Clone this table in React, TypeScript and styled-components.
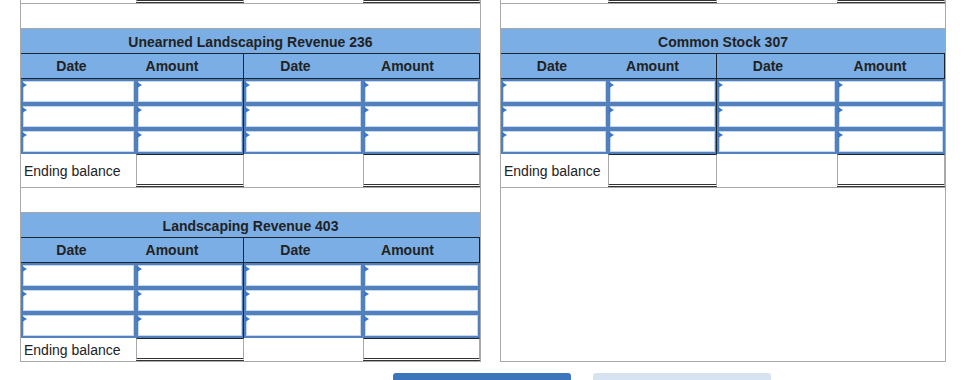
import React from 'react';
import styled, { createGlobalStyle } from 'styled-components';

const GRAY = '#a9a9a9';
const DARK = '#1b2530';
const HEAD_BG = '#7aaee4';
const INPUT_BORDER = '#5280bd';
const INPUT_INNER = '#c3d7f1';

const GlobalStyle = createGlobalStyle`
  html, body { margin: 0; padding: 0; background: #fff; }
  body {
    font-family: "Liberation Sans", Arial, sans-serif;
    color: #222;
    overflow: hidden;
  }
  * { box-sizing: border-box; }
`;

const Page = styled.div`
  display: flex;
  flex-direction: column;
`;

const Panels = styled.div`
  display: flex;
  align-items: flex-start;
  gap: 19px;
  padding-left: 20px;
`;

const Panel = styled.div<{ $cols: string }>`
  --cols: ${(p) => p.$cols};
  display: flex;
  flex-direction: column;
  height: 362px;
  border: 1px solid ${GRAY};
  border-top: none;
`;

const Row = styled.div`
  display: grid;
  grid-template-columns: var(--cols);
`;

const TailRow = styled(Row)`
  height: 4px;
  border-bottom: 1px solid ${GRAY};
`;

const Spacer = styled.div`
  height: 24px;
`;

const Section = styled.div`
  display: flex;
  flex-direction: column;
  border-top: 1px solid ${GRAY};
`;

const Title = styled.div`
  height: 25px;
  padding-top: 1px;
  background: ${HEAD_BG};
  border-bottom: 1px solid ${DARK};
  display: flex;
  align-items: center;
  justify-content: center;
  font-weight: bold;
  font-size: 14px;
  color: #222;
`;

const HeaderRow = styled(Row)`
  height: 25px;
  background: ${HEAD_BG};
  border-bottom: 1px solid ${DARK};
  box-shadow: inset -1px 0 0 ${DARK};
`;

const HeaderCell = styled.div<{ $shift: number; $divider?: boolean }>`
  display: flex;
  align-items: center;
  justify-content: center;
  padding-right: ${(p) => p.$shift}px;
  font-weight: bold;
  font-size: 14px;
  color: #222;
  ${(p) => (p.$divider ? `border-left: 1px solid ${DARK}; margin-left: -1px;` : '')}
`;

const InputRow = styled(Row)`
  height: 25px;
`;

const InputCell = styled.div<{ $divider?: boolean }>`
  height: 25px;
  background: #fff;
  border: 2px solid ${INPUT_BORDER};
  box-shadow: inset 0 0 0 1px ${INPUT_INNER}
    ${(p) => (p.$divider ? `, -1px 0 0 0 ${DARK}` : '')};
  padding-top: 1px;
`;

const Marker = styled.span`
  display: block;
  width: 0;
  height: 0;
  margin-left: -1px;
  border-top: 3.5px solid transparent;
  border-bottom: 3.5px solid transparent;
  border-left: 5px solid #3a77c8;
`;

const EndingRow = styled(Row)<{ $h: number; $last?: boolean }>`
  height: ${(p) => p.$h + (p.$last ? 0 : 1)}px;
  ${(p) => (p.$last ? '' : `border-bottom: 1px solid ${GRAY};`)}
`;

const Label = styled.div`
  display: flex;
  align-items: center;
  padding-left: 3px;
  font-size: 14px;
  color: #222;
  white-space: nowrap;
`;

const TotalBox = styled.div<{ $tail?: boolean }>`
  border-left: 1px solid ${GRAY};
  border-right: 1px solid ${GRAY};
  border-top: ${(p) => (p.$tail ? 'none' : `1px solid ${DARK}`)};
  border-bottom: 3px double #333;
  background: #fff;
`;

const Blank = styled.div``;

const Buttons = styled.div`
  display: flex;
  gap: 22px;
  margin-top: 11px;
  padding-left: 393px;
`;

const Button = styled.div<{ $primary?: boolean }>`
  width: 178px;
  height: 34px;
  border-radius: 3px;
  background: ${(p) => (p.$primary ? '#3b76bd' : '#d8e3f1')};
`;

type Shifts = [number, number, number, number];

const Tail = () => (
  <TailRow>
    <Blank />
    <TotalBox $tail />
    <Blank />
    <TotalBox $tail />
  </TailRow>
);

const InputLine = () => (
  <InputRow>
    <InputCell><Marker /></InputCell>
    <InputCell><Marker /></InputCell>
    <InputCell $divider><Marker /></InputCell>
    <InputCell><Marker /></InputCell>
  </InputRow>
);

const Account = ({
  title,
  shifts,
  endH,
  last,
}: {
  title: string;
  shifts: Shifts;
  endH: number;
  last?: boolean;
}) => (
  <Section>
    <Title>{title}</Title>
    <HeaderRow>
      <HeaderCell $shift={shifts[0]}>Date</HeaderCell>
      <HeaderCell $shift={shifts[1]}>Amount</HeaderCell>
      <HeaderCell $shift={shifts[2]} $divider>Date</HeaderCell>
      <HeaderCell $shift={shifts[3]}>Amount</HeaderCell>
    </HeaderRow>
    <InputLine />
    <InputLine />
    <InputLine />
    <EndingRow $h={endH} $last={last}>
      <Label>Ending balance</Label>
      <TotalBox />
      <Blank />
      <TotalBox />
    </EndingRow>
  </Section>
);

export default function App() {
  return (
    <Page>
      <GlobalStyle />
      <Panels>
        <Panel $cols="115px 108px 119px 117px">
          <Tail />
          <Spacer />
          <Account
            title="Unearned Landscaping Revenue 236"
            shifts={[14, 36, 16, 28]}
            endH={33}
          />
          <Spacer />
          <Account
            title="Landscaping Revenue 403"
            shifts={[14, 36, 16, 28]}
            endH={23}
            last
          />
        </Panel>
        <Panel $cols="107px 109px 120px 108px">
          <Tail />
          <Spacer />
          <Account title="Common Stock 307" shifts={[5, 20, 18, 22]} endH={33} />
        </Panel>
      </Panels>
      <Buttons>
        <Button $primary />
        <Button />
      </Buttons>
    </Page>
  );
}
